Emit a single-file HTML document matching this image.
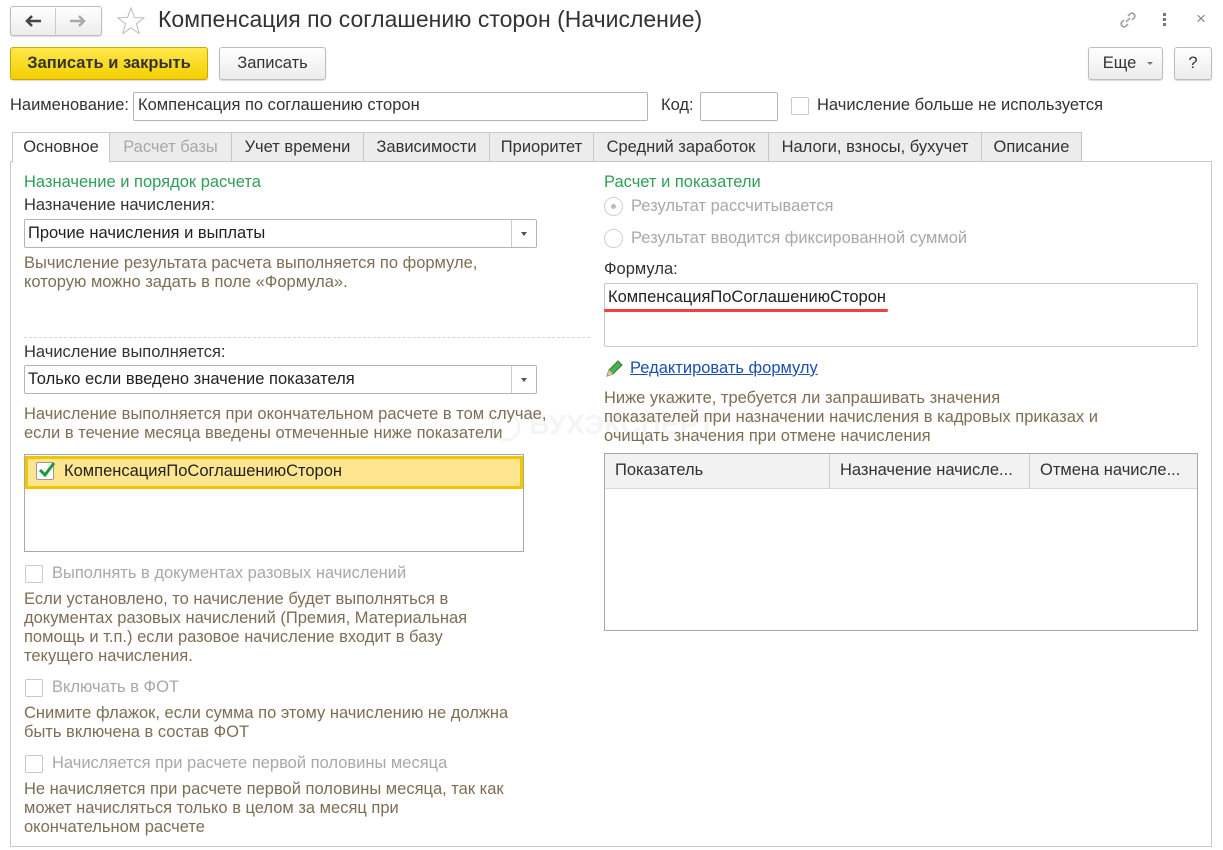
<!DOCTYPE html>
<html><head><meta charset="utf-8"><style>
*{box-sizing:border-box;margin:0;padding:0}
body{width:1223px;height:850px;background:#fff;font-family:"Liberation Sans",Arial,sans-serif;font-size:16.5px;color:#333;position:relative;overflow:hidden}
.a{position:absolute;white-space:nowrap}
.btn{position:absolute;border:1px solid #bdbdbd;border-radius:3px;background:linear-gradient(#fff,#ececec);box-shadow:0 1px 1px rgba(0,0,0,.15);text-align:center;line-height:30px;color:#333}
.inp{position:absolute;border:1px solid #b5b5b5;border-radius:2px;background:#fff}
.desc{color:#7d6e54;line-height:19px}
.dis{color:#a8a8a8}
.cb{position:absolute;width:18px;height:18px;border:1px solid #c8c8c8;border-radius:2px;background:#fff}
.tab{position:absolute;top:132px;height:30px;border:1px solid #c8c8c8;background:#ececec;text-align:center;line-height:28px;color:#333}
.green{color:#2e9e58}
</style></head><body>
<div class="btn" style="left:10px;top:6px;width:92px;height:30px;"></div>
<div class="a" style="left:55px;top:8px;width:1px;height:26px;background:#ccc"></div>
<svg class="a" style="left:24px;top:14px" width="22" height="14"><path d="M3 7H17M8 2L3 7L8 12" stroke="#444" stroke-width="2.5" fill="none"/></svg>
<svg class="a" style="left:67px;top:14px" width="22" height="14"><path d="M3 7H17M12 2L17 7L12 12" stroke="#aaa" stroke-width="2.5" fill="none"/></svg>
<svg class="a" style="left:116px;top:6px" width="30" height="30"><path d="M15 2L18.5 11.5L28 11.8L20.5 17.8L23.2 27.5L15 21.8L6.8 27.5L9.5 17.8L2 11.8L11.5 11.5Z" fill="none" stroke="#bbb" stroke-width="1"/></svg>
<div class="a" style="left:158px;top:6px;font-size:23px;color:#333">Компенсация по соглашению сторон (Начисление)</div>
<svg class="a" style="left:1117px;top:9px" width="22" height="22"><path d="M9 13L13 9M7 11L4.5 13.5a3 3 0 0 0 4 4L11 15M15 11L17.5 8.5a3 3 0 0 0-4-4L11 7" stroke="#999" stroke-width="1.5" fill="none"/></svg>
<div class="a" style="left:1163px;top:13px;width:3px;height:3px;background:#777;box-shadow:0 5px 0 #777,0 10px 0 #777"></div>
<div class="a" style="left:1196px;top:9px;font-size:17px;color:#888">×</div>

<div class="btn" style="left:10px;top:47px;width:198px;height:33px;background:linear-gradient(#ffe84a,#f4cf00);border-color:#c9a800;font-weight:bold;line-height:31px;color:#333">Записать и закрыть</div>
<div class="btn" style="left:219px;top:47px;width:107px;height:33px;line-height:31px">Записать</div>
<div class="btn" style="left:1088px;top:47px;width:75px;height:33px;line-height:31px;padding-right:12px">Еще</div>
<div class="a" style="left:1147px;top:62px;border:3px solid transparent;border-top:3px solid #777"></div>
<div class="btn" style="left:1174px;top:47px;width:38px;height:33px;line-height:31px">?</div>

<div class="a" style="left:10px;top:96px;">Наименование:</div>
<div class="inp" style="left:133px;top:92px;width:515px;height:29px"></div>
<div class="a" style="left:138px;top:96px;">Компенсация по соглашению сторон</div>
<div class="a" style="left:661px;top:96px;">Код:</div>
<div class="inp" style="left:700px;top:92px;width:78px;height:29px"></div>
<div class="cb" style="left:791px;top:97px"></div>
<div class="a" style="left:817px;top:96px;">Начисление больше не используется</div>

<div class="a" style="left:10px;top:161px;width:1202px;height:686px;border:1px solid #c8c8c8"></div>
<div class="tab" style="left:12px;width:98px;background:#fff;border-bottom-color:#fff;height:31px">Основное</div>
<div class="tab" style="left:109px;width:123px;color:#a8a8a8">Расчет базы</div>
<div class="tab" style="left:231px;width:133px">Учет времени</div>
<div class="tab" style="left:363px;width:127px">Зависимости</div>
<div class="tab" style="left:489px;width:105px">Приоритет</div>
<div class="tab" style="left:593px;width:176px">Средний заработок</div>
<div class="tab" style="left:768px;width:214px">Налоги, взносы, бухучет</div>
<div class="tab" style="left:981px;width:101px">Описание</div>

<div class="a" style="left:490px;top:408px;font-size:28px;font-weight:bold;color:#f5f5f5">◯ БУХЭКСПЕРТ</div>

<div class="a green" style="left:24px;top:173px">Назначение и порядок расчета</div>
<div class="a" style="left:24px;top:196px">Назначение начисления:</div>
<div class="inp" style="left:24px;top:219px;width:513px;height:29px"></div>
<div class="a" style="left:511px;top:220px;width:1px;height:27px;background:#ccc"></div>
<div class="a" style="left:521px;top:232px;border:3px solid transparent;border-top:4px solid #555"></div>
<div class="a" style="left:28px;top:224px;color:#222">Прочие начисления и выплаты</div>
<div class="a desc" style="left:24px;top:254px">Вычисление результата расчета выполняется по формуле,<br>которую можно задать в поле «Формула».</div>
<div class="a" style="left:24px;top:337px;width:566px;border-top:1px dashed #d5d5d5"></div>
<div class="a" style="left:24px;top:343px">Начисление выполняется:</div>
<div class="inp" style="left:24px;top:365px;width:513px;height:29px"></div>
<div class="a" style="left:511px;top:366px;width:1px;height:27px;background:#ccc"></div>
<div class="a" style="left:521px;top:378px;border:3px solid transparent;border-top:4px solid #555"></div>
<div class="a" style="left:28px;top:370px;color:#222">Только если введено значение показателя</div>
<div class="a desc" style="left:24px;top:405px">Начисление выполняется при окончательном расчете в том случае,<br>если в течение месяца введены отмеченные ниже показатели</div>
<div class="inp" style="left:24px;top:454px;width:500px;height:98px;border-color:#a8a8a8;border-radius:0"></div>
<div class="a" style="left:25px;top:456px;width:498px;height:33px;background:#fde68f;border:3px solid #f5c400"></div>
<div class="cb" style="left:36px;top:462px;border-color:#999"></div>
<svg class="a" style="left:37px;top:459px" width="20" height="20"><path d="M3 11L8 16L17 4" stroke="#1a9a3a" stroke-width="3" fill="none"/></svg>
<div class="a" style="left:64px;top:462px;color:#222">КомпенсацияПоСоглашениюСторон</div>

<div class="cb" style="left:25px;top:565px"></div>
<div class="a dis" style="left:52px;top:564px">Выполнять в документах разовых начислений</div>
<div class="a desc" style="left:24px;top:590px">Если установлено, то начисление будет выполняться в<br>документах разовых начислений (Премия, Материальная<br>помощь и т.п.) если разовое начисление входит в базу<br>текущего начисления.</div>
<div class="cb" style="left:25px;top:679px"></div>
<div class="a dis" style="left:52px;top:678px">Включать в ФОТ</div>
<div class="a desc" style="left:24px;top:704px">Снимите флажок, если сумма по этому начислению не должна<br>быть включена в состав ФОТ</div>
<div class="cb" style="left:25px;top:755px"></div>
<div class="a dis" style="left:52px;top:754px">Начисляется при расчете первой половины месяца</div>
<div class="a desc" style="left:24px;top:780px">Не начисляется при расчете первой половины месяца, так как<br>может начисляться только в целом за месяц при<br>окончательном расчете</div>

<div class="a green" style="left:604px;top:173px">Расчет и показатели</div>
<div class="a" style="left:604px;top:197px;width:19px;height:19px;border:1px solid #d0d0d0;border-radius:50%"></div>
<div class="a" style="left:611px;top:204px;width:5px;height:5px;border-radius:50%;background:#bbb"></div>
<div class="a dis" style="left:631px;top:197px">Результат рассчитывается</div>
<div class="a" style="left:604px;top:229px;width:19px;height:19px;border:1px solid #d0d0d0;border-radius:50%"></div>
<div class="a dis" style="left:631px;top:229px">Результат вводится фиксированной суммой</div>
<div class="a" style="left:604px;top:260px">Формула:</div>
<div class="inp" style="left:604px;top:283px;width:594px;height:64px;border-color:#c8c8c8"></div>
<div class="a" style="left:608px;top:288px;color:#222">КомпенсацияПоСоглашениюСторон</div>
<div class="a" style="left:604px;top:309px;width:284px;height:3px;background:#f04040;border-radius:2px"></div>
<svg class="a" style="left:604px;top:359px" width="20" height="20"><path d="M3 17L5 11L14 2L18 6L9 15Z" fill="#4caf50" stroke="#2e7d32"/><path d="M3 17L5 11L9 15Z" fill="#e8c890"/></svg>
<div class="a" style="left:630px;top:359px;color:#1b4fb0;text-decoration:underline">Редактировать формулу</div>
<div class="a desc" style="left:604px;top:389px">Ниже укажите, требуется ли запрашивать значения<br>показателей при назначении начисления в кадровых приказах и<br>очищать значения при отмене начисления</div>
<div class="a" style="left:604px;top:453px;width:594px;height:178px;border:1px solid #a8a8a8"></div>
<div class="a" style="left:605px;top:454px;width:592px;height:35px;background:#f2f2f2;border-bottom:1px solid #d8d8d8"></div>
<div class="a" style="left:829px;top:454px;width:1px;height:35px;background:#d0d0d0"></div>
<div class="a" style="left:1029px;top:454px;width:1px;height:35px;background:#d0d0d0"></div>
<div class="a" style="left:615px;top:461px">Показатель</div>
<div class="a" style="left:840px;top:461px">Назначение начисле...</div>
<div class="a" style="left:1040px;top:461px">Отмена начисле...</div>
</body></html>
